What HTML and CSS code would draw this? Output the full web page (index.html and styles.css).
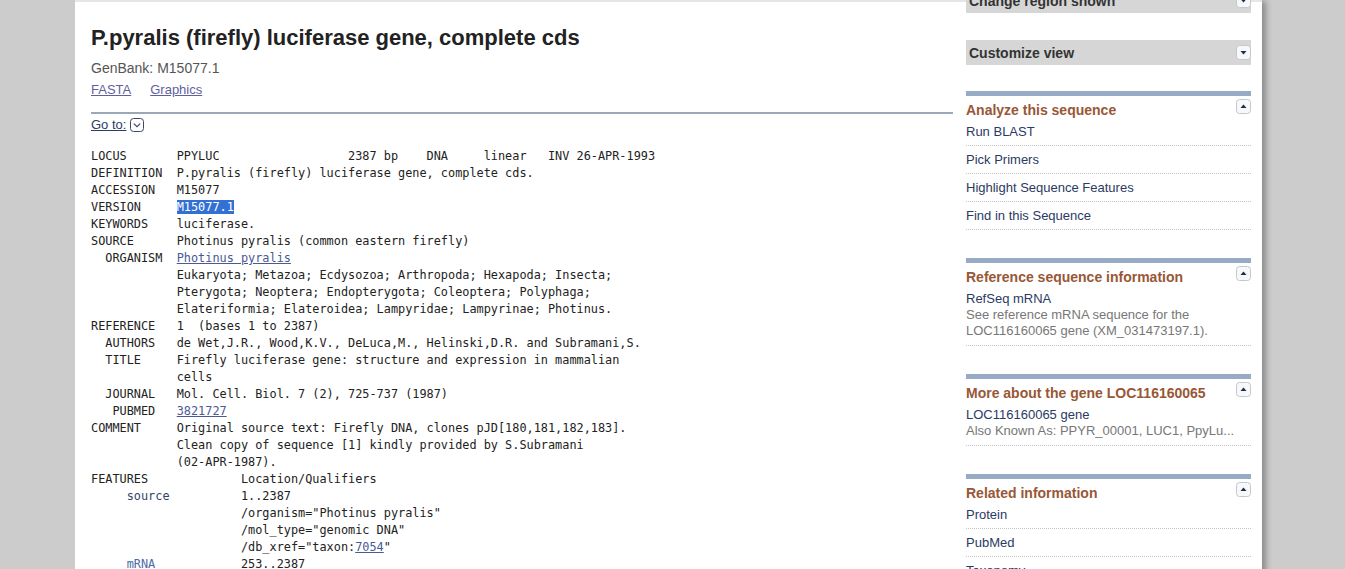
FILE: index.html
```html
<!DOCTYPE html>
<html>
<head>
<meta charset="utf-8">
<title>P.pyralis (firefly) luciferase gene, complete cds</title>
<link rel="stylesheet" href="styles.css">
</head>
<body>
<div class="page">
  <div class="main">
    <h1 class="title">P.pyralis (firefly) luciferase gene, complete cds</h1>
    <div class="acc">GenBank: M15077.1</div>
    <div class="formats"><a href="#">FASTA</a><a href="#">Graphics</a></div>
    <div class="rule"></div>
    <div class="goto"><a href="#">Go to:</a><svg class="goto-icon" width="14" height="14" viewBox="0 0 14 14"><rect x="0.5" y="0.5" width="13" height="13" rx="3" fill="#fff" stroke="#3b4868"/><path d="M3.8 5.6 L7 8.6 L10.2 5.6" fill="none" stroke="#3b4868" stroke-width="1.2"/></svg></div>
<pre class="record">LOCUS       PPYLUC                  2387 bp    DNA     linear   INV 26-APR-1993
DEFINITION  P.pyralis (firefly) luciferase gene, complete cds.
ACCESSION   M15077
VERSION     <span class="sel">M15077.1</span>
KEYWORDS    luciferase.
SOURCE      Photinus pyralis (common eastern firefly)
  ORGANISM  <a href="#">Photinus pyralis</a>
            Eukaryota; Metazoa; Ecdysozoa; Arthropoda; Hexapoda; Insecta;
            Pterygota; Neoptera; Endopterygota; Coleoptera; Polyphaga;
            Elateriformia; Elateroidea; Lampyridae; Lampyrinae; Photinus.
REFERENCE   1  (bases 1 to 2387)
  AUTHORS   de Wet,J.R., Wood,K.V., DeLuca,M., Helinski,D.R. and Subramani,S.
  TITLE     Firefly luciferase gene: structure and expression in mammalian
            cells
  JOURNAL   Mol. Cell. Biol. 7 (2), 725-737 (1987)
   PUBMED   <a href="#">3821727</a>
COMMENT     Original source text: Firefly DNA, clones pJD[180,181,182,183].
            Clean copy of sequence [1] kindly provided by S.Subramani
            (02-APR-1987).
FEATURES             Location/Qualifiers
     <span class="fkey">source</span>          1..2387
                     /organism="Photinus pyralis"
                     /mol_type="genomic DNA"
                     /db_xref="taxon:<a href="#">7054</a>"
     <span class="fkey fkey-link">mRNA</span>            253..2387</pre>
  </div>
  <div class="side">
    <div class="bar"><span>Change region shown</span><svg class="tog" width="15" height="15" viewBox="0 0 15 15"><rect x="0.5" y="0.5" width="14" height="14" rx="3" fill="#f7f8fa" stroke="#c4c7cc"/><path d="M4.5 6 L10.5 6 L7.5 9.5 Z" fill="#1f2c48"/></svg></div>
    <div class="bar"><span>Customize view</span><svg class="tog" width="15" height="15" viewBox="0 0 15 15"><rect x="0.5" y="0.5" width="14" height="14" rx="3" fill="#f7f8fa" stroke="#c4c7cc"/><path d="M4.5 6 L10.5 6 L7.5 9.5 Z" fill="#1f2c48"/></svg></div>

    <div class="portlet">
      <div class="phead"><h3>Analyze this sequence</h3><svg class="tog" width="15" height="15" viewBox="0 0 15 15"><rect x="0.5" y="0.5" width="14" height="14" rx="3" fill="#f7f8fa" stroke="#c4c7cc"/><path d="M4.5 9 L10.5 9 L7.5 5.5 Z" fill="#1f2c48"/></svg></div>
      <ul class="plist">
        <li><a href="#">Run BLAST</a></li>
        <li><a href="#">Pick Primers</a></li>
        <li><a href="#">Highlight Sequence Features</a></li>
        <li><a href="#">Find in this Sequence</a></li>
      </ul>
    </div>

    <div class="portlet">
      <div class="phead"><h3>Reference sequence information</h3><svg class="tog" width="15" height="15" viewBox="0 0 15 15"><rect x="0.5" y="0.5" width="14" height="14" rx="3" fill="#f7f8fa" stroke="#c4c7cc"/><path d="M4.5 9 L10.5 9 L7.5 5.5 Z" fill="#1f2c48"/></svg></div>
      <ul class="plist">
        <li><a href="#">RefSeq mRNA</a><div class="desc">See reference mRNA sequence for the LOC116160065 gene (XM_031473197.1).</div></li>
      </ul>
    </div>

    <div class="portlet">
      <div class="phead"><h3>More about the gene LOC116160065</h3><svg class="tog" width="15" height="15" viewBox="0 0 15 15"><rect x="0.5" y="0.5" width="14" height="14" rx="3" fill="#f7f8fa" stroke="#c4c7cc"/><path d="M4.5 9 L10.5 9 L7.5 5.5 Z" fill="#1f2c48"/></svg></div>
      <ul class="plist">
        <li><a href="#">LOC116160065 gene</a><div class="desc">Also Known As: PPYR_00001, LUC1, PpyLu...</div></li>
      </ul>
    </div>

    <div class="portlet">
      <div class="phead"><h3>Related information</h3><svg class="tog" width="15" height="15" viewBox="0 0 15 15"><rect x="0.5" y="0.5" width="14" height="14" rx="3" fill="#f7f8fa" stroke="#c4c7cc"/><path d="M4.5 9 L10.5 9 L7.5 5.5 Z" fill="#1f2c48"/></svg></div>
      <ul class="plist">
        <li><a href="#">Protein</a></li>
        <li><a href="#">PubMed</a></li>
        <li><a href="#">Taxonomy</a></li>
      </ul>
    </div>
  </div>
</div>
</body>
</html>
```
FILE: styles.css
```css
html, body {
  margin: 0;
  padding: 0;
  background: #cccccc;
  overflow: hidden;
}
body {
  font-family: "Liberation Sans", Arial, sans-serif;
  color: #222;
}
.page {
  margin-left: 75px;
  width: 1187px;
  min-height: 569px;
  background: #fff;
  border-top: 2px solid #e6e6e6;
  box-sizing: border-box;
  display: flex;
  gap: 13px;
  padding: 0 11px 0 16px;
  box-shadow: 5px 0 6px -1px rgba(0, 0, 0, 0.32);
}
.main {
  flex: 1;
  min-width: 0;
}
.title {
  margin: 23px 0 0;
  font-size: 22px;
  line-height: 26px;
  font-weight: bold;
  color: #222;
}
.acc {
  margin-top: 8px;
  font-size: 14px;
  line-height: 18px;
  color: #555;
}
.formats {
  margin-top: 4px;
  font-size: 13px;
  line-height: 17px;
  display: flex;
  gap: 19px;
}
.formats a {
  color: #5f5f9f;
  text-decoration: underline;
}
.rule {
  margin-top: 14px;
  height: 2px;
  background: #9ca8b6;
}
.goto {
  margin-top: 3px;
  font-size: 13px;
  line-height: 16px;
  display: flex;
  align-items: center;
  gap: 4px;
}
.goto a {
  color: #2c3c64;
  text-decoration: underline;
}
.goto-icon {
  display: block;
}
.record {
  margin: 15px 0 0;
  font-family: "DejaVu Sans Mono", "Liberation Mono", monospace;
  font-size: 11.87px;
  line-height: 17px;
  color: #222;
}
.record a {
  color: #4a5a94;
  text-decoration: underline;
}
.sel {
  background: #3370d4;
  color: #fff;
}
.fkey {
  color: #34446a;
}
.fkey-link {
  color: #4d6aa6;
}
.side {
  width: 285px;
  flex: none;
  margin-top: -14px;
}
.bar {
  height: 25px;
  background: #d6d6d6;
  display: flex;
  align-items: center;
  justify-content: space-between;
  padding-left: 3px;
  margin-bottom: 27px;
  font-size: 14px;
  font-weight: bold;
  color: #333;
}
.bar:nth-child(2) {
  margin-bottom: 26px;
}
.tog {
  display: block;
  flex: none;
}
.portlet {
  border-top: 5px solid #98abc5;
  margin-bottom: 28px;
}
.phead {
  display: flex;
  justify-content: space-between;
  align-items: flex-start;
  height: 22px;
}
.phead h3 {
  margin: 6px 0 0;
  font-size: 14px;
  line-height: 16px;
  font-weight: bold;
  color: #985735;
}
.phead .tog {
  margin-top: 3px;
}
.plist {
  list-style: none;
  margin: 0;
  padding: 0;
}
.plist li {
  padding: 6px 0 5px;
  border-bottom: 1px dotted #c4c4c4;
  font-size: 13px;
  line-height: 16px;
}
.plist a {
  color: #2b3a63;
  text-decoration: none;
}
.desc {
  color: #777;
  padding-bottom: 1px;
}
```
